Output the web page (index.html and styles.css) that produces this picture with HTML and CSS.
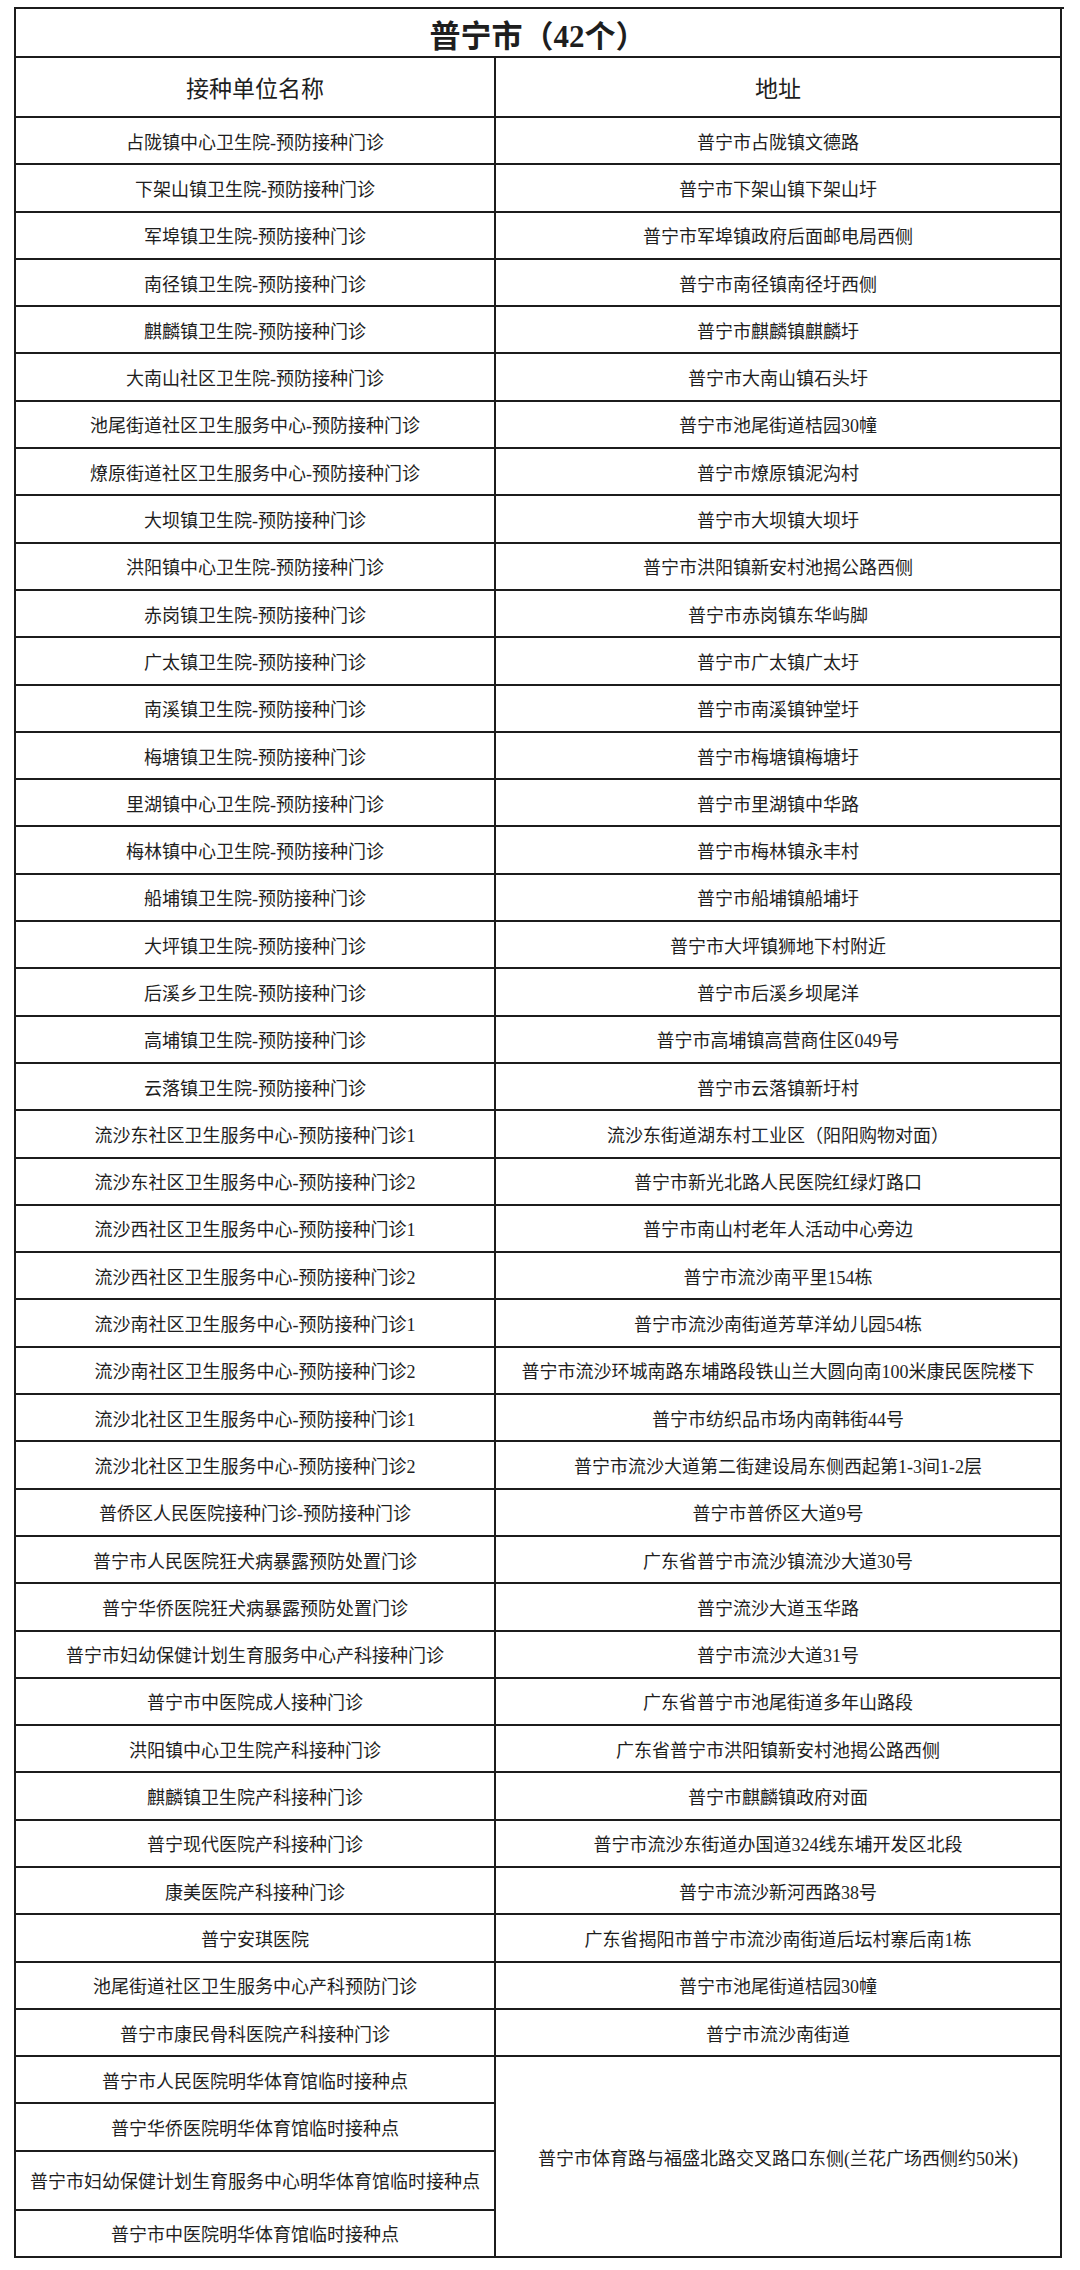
FILE: index.html
```html
<!DOCTYPE html>
<html lang="zh-CN">
<head>
<meta charset="utf-8">
<title>普宁市（42个）</title>
<link rel="stylesheet" href="styles.css">
</head>
<body>
<div class="sheet">
  <div class="title">普宁市（42个）</div>
  <div class="head">接种单位名称</div>
  <div class="head">地址</div>

  <div class="cell">占陇镇中心卫生院-预防接种门诊</div><div class="cell">普宁市占陇镇文德路</div>
  <div class="cell">下架山镇卫生院-预防接种门诊</div><div class="cell">普宁市下架山镇下架山圩</div>
  <div class="cell">军埠镇卫生院-预防接种门诊</div><div class="cell">普宁市军埠镇政府后面邮电局西侧</div>
  <div class="cell">南径镇卫生院-预防接种门诊</div><div class="cell">普宁市南径镇南径圩西侧</div>
  <div class="cell">麒麟镇卫生院-预防接种门诊</div><div class="cell">普宁市麒麟镇麒麟圩</div>
  <div class="cell">大南山社区卫生院-预防接种门诊</div><div class="cell">普宁市大南山镇石头圩</div>
  <div class="cell">池尾街道社区卫生服务中心-预防接种门诊</div><div class="cell">普宁市池尾街道桔园30幢</div>
  <div class="cell">燎原街道社区卫生服务中心-预防接种门诊</div><div class="cell">普宁市燎原镇泥沟村</div>
  <div class="cell">大坝镇卫生院-预防接种门诊</div><div class="cell">普宁市大坝镇大坝圩</div>
  <div class="cell">洪阳镇中心卫生院-预防接种门诊</div><div class="cell">普宁市洪阳镇新安村池揭公路西侧</div>
  <div class="cell">赤岗镇卫生院-预防接种门诊</div><div class="cell">普宁市赤岗镇东华屿脚</div>
  <div class="cell">广太镇卫生院-预防接种门诊</div><div class="cell">普宁市广太镇广太圩</div>
  <div class="cell">南溪镇卫生院-预防接种门诊</div><div class="cell">普宁市南溪镇钟堂圩</div>
  <div class="cell">梅塘镇卫生院-预防接种门诊</div><div class="cell">普宁市梅塘镇梅塘圩</div>
  <div class="cell">里湖镇中心卫生院-预防接种门诊</div><div class="cell">普宁市里湖镇中华路</div>
  <div class="cell">梅林镇中心卫生院-预防接种门诊</div><div class="cell">普宁市梅林镇永丰村</div>
  <div class="cell">船埔镇卫生院-预防接种门诊</div><div class="cell">普宁市船埔镇船埔圩</div>
  <div class="cell">大坪镇卫生院-预防接种门诊</div><div class="cell">普宁市大坪镇狮地下村附近</div>
  <div class="cell">后溪乡卫生院-预防接种门诊</div><div class="cell">普宁市后溪乡坝尾洋</div>
  <div class="cell">高埔镇卫生院-预防接种门诊</div><div class="cell">普宁市高埔镇高营商住区049号</div>
  <div class="cell">云落镇卫生院-预防接种门诊</div><div class="cell">普宁市云落镇新圩村</div>
  <div class="cell">流沙东社区卫生服务中心-预防接种门诊1</div><div class="cell">流沙东街道湖东村工业区（阳阳购物对面）</div>
  <div class="cell">流沙东社区卫生服务中心-预防接种门诊2</div><div class="cell">普宁市新光北路人民医院红绿灯路口</div>
  <div class="cell">流沙西社区卫生服务中心-预防接种门诊1</div><div class="cell">普宁市南山村老年人活动中心旁边</div>
  <div class="cell">流沙西社区卫生服务中心-预防接种门诊2</div><div class="cell">普宁市流沙南平里154栋</div>
  <div class="cell">流沙南社区卫生服务中心-预防接种门诊1</div><div class="cell">普宁市流沙南街道芳草洋幼儿园54栋</div>
  <div class="cell">流沙南社区卫生服务中心-预防接种门诊2</div><div class="cell">普宁市流沙环城南路东埔路段铁山兰大圆向南100米康民医院楼下</div>
  <div class="cell">流沙北社区卫生服务中心-预防接种门诊1</div><div class="cell">普宁市纺织品市场内南韩街44号</div>
  <div class="cell">流沙北社区卫生服务中心-预防接种门诊2</div><div class="cell">普宁市流沙大道第二街建设局东侧西起第1-3间1-2层</div>
  <div class="cell">普侨区人民医院接种门诊-预防接种门诊</div><div class="cell">普宁市普侨区大道9号</div>
  <div class="cell">普宁市人民医院狂犬病暴露预防处置门诊</div><div class="cell">广东省普宁市流沙镇流沙大道30号</div>
  <div class="cell">普宁华侨医院狂犬病暴露预防处置门诊</div><div class="cell">普宁流沙大道玉华路</div>
  <div class="cell">普宁市妇幼保健计划生育服务中心产科接种门诊</div><div class="cell">普宁市流沙大道31号</div>
  <div class="cell">普宁市中医院成人接种门诊</div><div class="cell">广东省普宁市池尾街道多年山路段</div>
  <div class="cell">洪阳镇中心卫生院产科接种门诊</div><div class="cell">广东省普宁市洪阳镇新安村池揭公路西侧</div>
  <div class="cell">麒麟镇卫生院产科接种门诊</div><div class="cell">普宁市麒麟镇政府对面</div>
  <div class="cell">普宁现代医院产科接种门诊</div><div class="cell">普宁市流沙东街道办国道324线东埔开发区北段</div>
  <div class="cell">康美医院产科接种门诊</div><div class="cell">普宁市流沙新河西路38号</div>
  <div class="cell">普宁安琪医院</div><div class="cell">广东省揭阳市普宁市流沙南街道后坛村寨后南1栋</div>
  <div class="cell">池尾街道社区卫生服务中心产科预防门诊</div><div class="cell">普宁市池尾街道桔园30幢</div>
  <div class="cell">普宁市康民骨科医院产科接种门诊</div><div class="cell">普宁市流沙南街道</div>

  <div class="cell">普宁市人民医院明华体育馆临时接种点</div>
  <div class="cell merged">普宁市体育路与福盛北路交叉路口东侧(兰花广场西侧约50米)</div>
  <div class="cell">普宁华侨医院明华体育馆临时接种点</div>
  <div class="cell">普宁市妇幼保健计划生育服务中心明华体育馆临时接种点</div>
  <div class="cell">普宁市中医院明华体育馆临时接种点</div>
</div>
</body>
</html>
```

FILE: styles.css
```css
html, body {
  margin: 0;
  padding: 0;
  background: #ffffff;
}

body {
  font-family: "Liberation Serif", "Noto Sans CJK SC", serif;
  color: #1e1e1e;
}

.sheet {
  display: grid;
  width: 1048px;
  margin: 7px 0 0 14px;
  grid-template-columns: 480px 566px;
  grid-template-rows: 49px 60px repeat(41, 47.3px) 47.3px 47.3px 59px 47.3px;
  border-top: 2px solid #1c1c1c;
  border-left: 2px solid #1c1c1c;
}

.title,
.head,
.cell {
  box-sizing: border-box;
  display: flex;
  align-items: center;
  justify-content: center;
  text-align: center;
  white-space: nowrap;
  border-right: 2px solid #1c1c1c;
  border-bottom: 2px solid #1c1c1c;
}

.title {
  grid-column: 1 / span 2;
  font-size: 31px;
  font-weight: 700;
  padding-top: 2px;
}

.head {
  font-size: 23px;
}

.cell {
  font-size: 18px;
}

.merged {
  grid-column: 2;
  grid-row: span 4;
}
```
